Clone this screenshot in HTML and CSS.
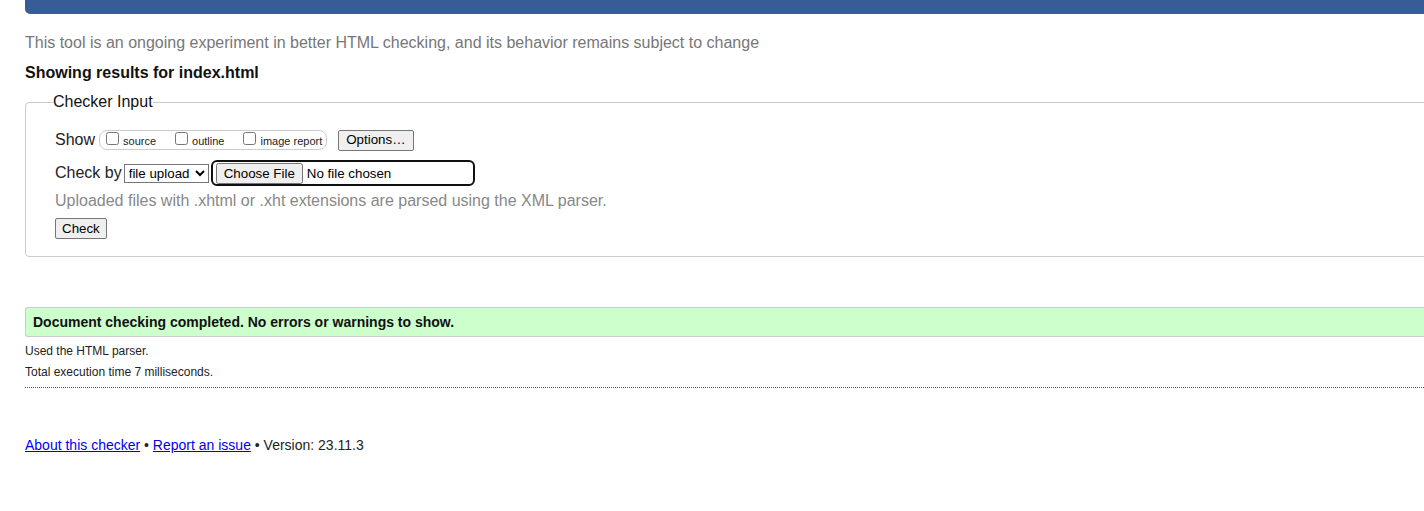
FILE: index.html
```html
<!DOCTYPE html>
<html lang="en">
<head>
<meta charset="utf-8">
<title>Nu Html Checker</title>
<link rel="stylesheet" href="styles.css">
</head>
<body>
<div class="page">
  <div class="bar"></div>
  <p class="intro">This tool is an ongoing experiment in better HTML checking, and its behavior remains subject to change</p>
  <p class="showing">Showing results for index.html</p>
  <fieldset class="checker">
    <legend>Checker Input</legend>
    <div class="row show-row">
      <span class="row-label">Show</span>
      <span class="opts">
        <label class="opt"><input type="checkbox"><span>source</span></label>
        <label class="opt"><input type="checkbox"><span>outline</span></label>
        <label class="opt"><input type="checkbox"><span>image report</span></label>
      </span>
      <button class="btn options">Options…</button>
    </div>
    <div class="row by-row">
      <span class="row-label">Check by</span>
      <select class="sel"><option>file upload</option></select>
      <span class="file-wrap"><input type="file" class="file"></span>
    </div>
    <p class="hint">Uploaded files with .xhtml or .xht extensions are parsed using the XML parser.</p>
    <button class="btn check">Check</button>
  </fieldset>
  <div class="success">Document checking completed. No errors or warnings to show.</div>
  <p class="detail">Used the HTML parser.</p>
  <p class="detail">Total execution time 7 milliseconds.</p>
  <hr class="dots">
  <p class="footer"><a href="#">About this checker</a> • <a href="#">Report an issue</a> • Version: 23.11.3</p>
</div>
</body>
</html>
```

FILE: styles.css
```css
html, body {
  margin: 0;
  padding: 0;
  background: #fff;
  overflow: hidden;
}
body {
  font-family: "Liberation Sans", Arial, sans-serif;
  color: #111;
}
.page {
  padding-left: 25px;
  width: calc(100% + 40px);
  box-sizing: border-box;
}
.bar {
  height: 14px;
  background: #365d95;
  border-bottom-left-radius: 5px;
}
.intro {
  margin: 20px 0 0;
  font-size: 16px;
  line-height: 18px;
  color: #777;
}
.showing {
  margin: 12px 0 0;
  font-size: 16px;
  line-height: 18px;
  font-weight: bold;
  color: #111;
}
.checker {
  margin: 11px 0 0;
  padding: 0 0 17px 29px;
  border: 1px solid #ccc;
  border-radius: 4px;
  min-width: 0;
}
.checker legend {
  padding: 0;
  margin-left: -2px;
  font-size: 16px;
  line-height: 18px;
  color: #111;
}
.row {
  display: flex;
  align-items: center;
}
.row-label {
  font-size: 16px;
  color: #222;
}
.show-row {
  margin-top: 18px;
  height: 22px;
}
.opts {
  display: inline-flex;
  align-items: center;
  height: 18px;
  margin-left: 4px;
  padding: 0 4px 0 6px;
  border: 1px solid #ccc;
  border-radius: 8px;
}
.opt {
  display: inline-flex;
  align-items: center;
  font-size: 11px;
  color: #222;
  margin-right: 19px;
}
.opt:last-child { margin-right: 0; }
.opt input {
  margin: 0 4px 0 0;
  width: 13px;
  height: 13px;
  position: relative;
  top: -2px;
}
.opt span {
  position: relative;
  top: 1px;
}
.btn {
  font-family: "Liberation Sans", Arial, sans-serif;
  font-size: 13.33px;
  color: #000;
  background: #efefef;
  border: 1px solid #767676;
  border-radius: 2px;
  padding: 1px 6px;
  height: 21px;
  line-height: 16px;
}
.options {
  margin-left: 11px;
  padding: 1px 7px;
}
.by-row {
  margin-top: 9px;
  height: 26px;
}
.sel {
  margin-left: 2px;
  height: 19px;
  font-family: "Liberation Sans", Arial, sans-serif;
  font-size: 13.33px;
  color: #000;
  background: #fff;
  border: 1px solid #767676;
  border-radius: 0;
  padding: 0;
  width: 85px;
}
.file-wrap {
  display: inline-flex;
  align-items: center;
  margin-left: 2px;
  width: 257px;
  height: 22px;
  border: 2px solid #101010;
  border-radius: 6px;
  padding-left: 3px;
}
.file {
  font-family: "Liberation Sans", Arial, sans-serif;
  font-size: 13.33px;
  color: #000;
}
.hint {
  margin: 6px 0 0;
  font-size: 16px;
  line-height: 18px;
  color: #888;
}
.check {
  margin-top: 8px;
  height: 21px;
  padding: 1px 6px;
}
.success {
  margin-top: 50px;
  height: 28px;
  line-height: 28px;
  padding-left: 7px;
  background: #ccffcc;
  border: 1px solid #ccc;
  border-right: none;
  border-radius: 3px 0 0 3px;
  font-size: 14px;
  font-weight: bold;
  color: #111;
}
.detail {
  margin: 0;
  font-size: 12px;
  line-height: 14px;
  color: #222;
}
.success + .detail {
  margin-top: 7px;
}
.detail + .detail {
  margin-top: 7px;
}
.dots {
  margin: 8px 0 0;
  border: none;
  border-top: 1px dotted #555;
  height: 0;
}
.footer {
  margin: 49px 0 0;
  font-size: 14px;
  line-height: 16px;
  color: #222;
}
.footer a {
  color: #0000ee;
}
```
